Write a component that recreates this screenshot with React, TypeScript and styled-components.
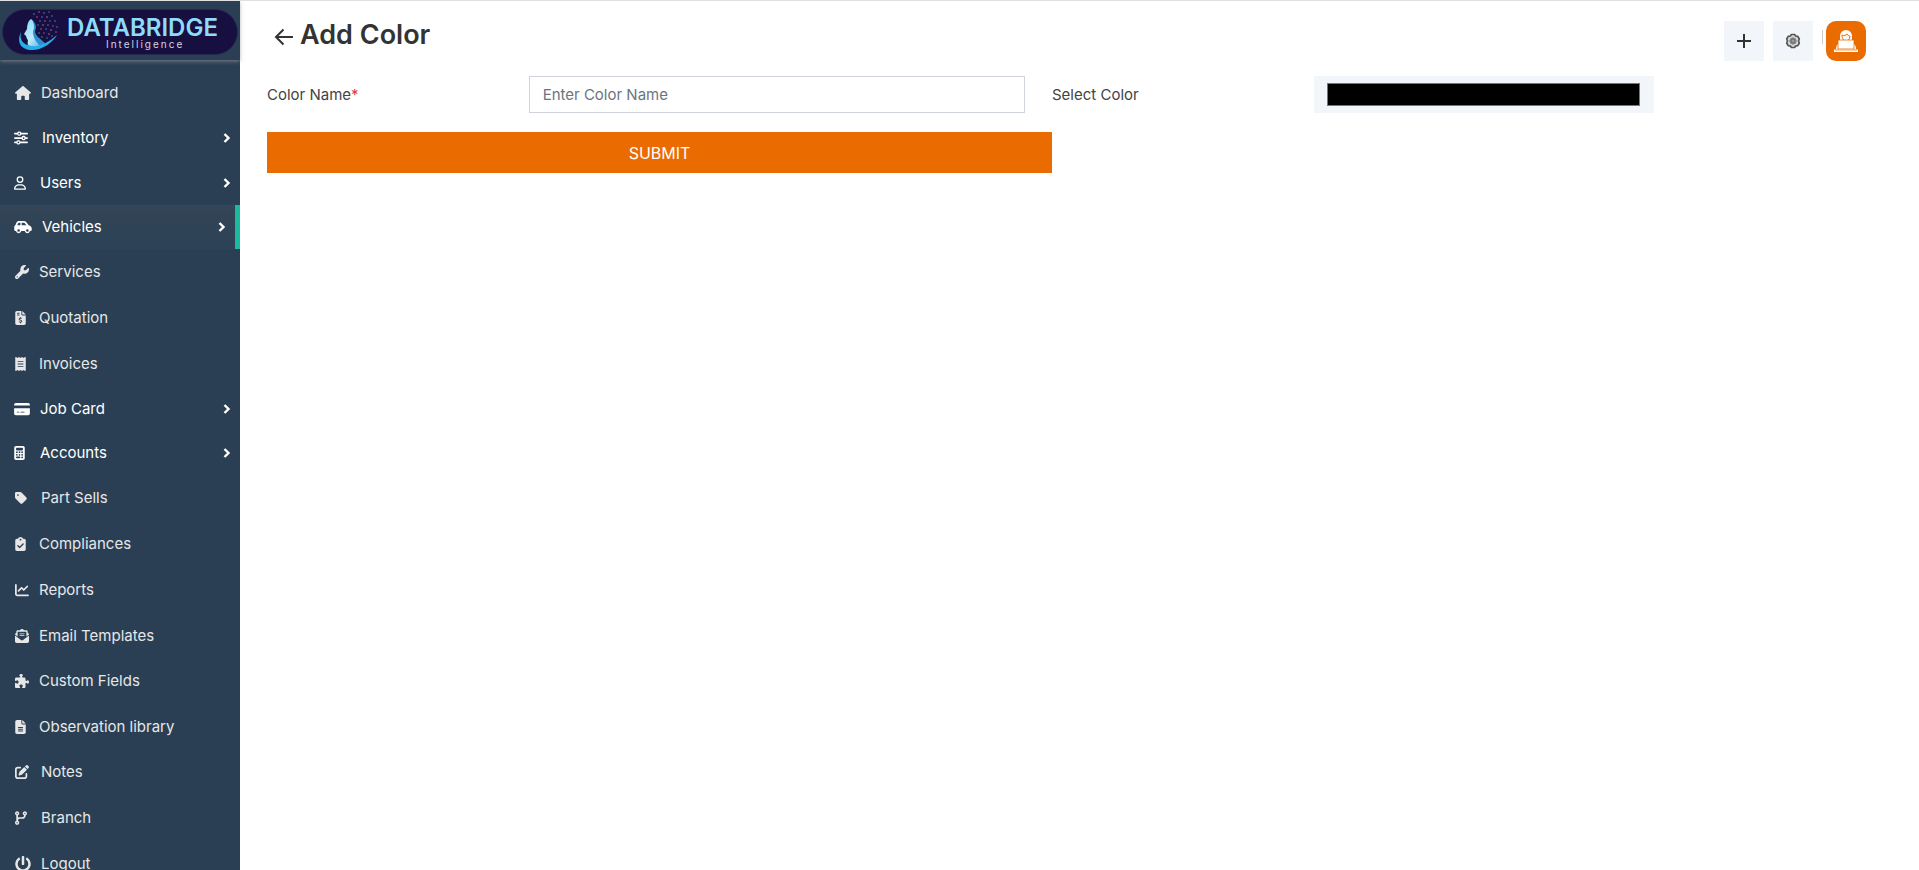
import React from 'react';
import styled, { createGlobalStyle, css } from 'styled-components';
import type { IconType } from 'react-icons';
import {
  FaHouse, FaSliders, FaRegUser, FaCarSide, FaWrench, FaFileInvoiceDollar, FaReceipt,
  FaCreditCard, FaCalculator, FaTag, FaPuzzlePiece, FaFileLines, FaChartLine,
  FaPenToSquare, FaCodeBranch, FaEnvelopeOpenText, FaClipboardCheck,
} from 'react-icons/fa6';
import { FaPowerOff } from 'react-icons/fa';

const GlobalStyle = createGlobalStyle`
  *, *::before, *::after { box-sizing: border-box; }
  body {
    margin: 0;
    background: #fff;
    color: #333;
    font-family: Inter, "Liberation Sans", sans-serif;
    font-size: 15px;
    line-height: 20px;
  }
`;

const Page = styled.div`
  display: flex;
  height: 100vh;
  border-top: 1px solid #e0e0e0;
  overflow: hidden;
`;

const Sidebar = styled.aside`
  flex: 0 0 240px;
  background: #2a3f54;
`;

const Brand = styled.a`
  display: flex;
  align-items: center;
  height: 59px;
  padding: 2px 2px 0;
  box-shadow: 0 1px 4px rgba(160, 160, 160, 0.7);
`;

const BrandLogo = styled.svg`
  display: block;
  width: 236px;
  height: 46px;
`;

const Menu = styled.ul`
  list-style: none;
  margin: 0;
  padding: 10px 0 0;
`;

const rowStyle = css<{ $height: number; $active?: boolean }>`
  display: flex;
  align-items: center;
  width: 100%;
  height: ${(p) => p.$height}px;
  border: 0;
  background: none;
  font: inherit;
  text-align: left;
  text-decoration: none;
  cursor: pointer;
`;

const IconSlot = styled.span<{ $iconWidth: number; $wide?: boolean }>`
  display: flex;
  align-items: center;
  flex: 0 0 ${(p) => (p.$wide ? 26 : 24)}px;

  & > svg {
    flex: none;
    width: ${(p) => p.$iconWidth}px;
  }
`;

const MenuLink = styled.a<{ $height: number }>`
  ${rowStyle}
  padding: 0 10px 0 15px;
  color: #e7e7e7;
`;

const MenuGroup = styled.button<{ $height: number; $active?: boolean }>`
  ${rowStyle}
  padding: 0 9px 0 14px;
  color: #fff;
  ${IconSlot} { margin-right: 2px; }
  ${(p) => p.$active && css`
    background: linear-gradient(#334556, #2c4257);
    border-right: 5px solid #1abb9c;
  `}
`;

const MenuText = styled.span`
  flex: 1;
`;

const Main = styled.main`
  flex: 1;
  min-width: 0;
`;

const Header = styled.header`
  display: flex;
  align-items: flex-start;
  justify-content: space-between;
  height: 75px;
  padding: 20px 53px 0 34px;
`;

const TitleBar = styled.div`
  display: flex;
  align-items: center;
  gap: 6px;
  height: 28px;
`;

const BackLink = styled.a`
  display: flex;
  padding-top: 4px;
  color: #333;
`;

const Title = styled.h1`
  margin: 0;
  font-size: 27px;
  font-weight: 600;
  line-height: 28px;
`;

const Actions = styled.div`
  display: flex;
  gap: 9px;
`;

const ActionButton = styled.button`
  display: flex;
  align-items: center;
  justify-content: center;
  width: 40px;
  height: 40px;
  padding: 0;
  border: 0;
  background: #f2f5fa;
  cursor: pointer;
`;

const Account = styled.div`
  display: flex;
  gap: 3px;
`;

const Divider = styled.span`
  width: 1px;
  height: 14px;
  margin-top: 9px;
  background: #ccc;
`;

const AvatarButton = styled(ActionButton)`
  border-radius: 10px;
  background: #ea6b00;
`;

const ColorForm = styled.form`
  display: grid;
  grid-template-columns: 2fr 4fr 2fr 4fr;
  row-gap: 19px;
  align-items: center;
  padding: 0 82px 0 27px;
`;

const Label = styled.label`
  color: #444;
`;

const Required = styled.span`
  color: #e03545;
`;

const FieldCell = styled.div`
  display: flex;
  padding-right: 27px;
`;

const TextInput = styled.input`
  width: 100%;
  height: 37px;
  padding: 0 13px;
  border: 1px solid #ced4da;
  border-radius: 0;
  background: #fff;
  color: #444;
  font: inherit;
  &::placeholder { color: #6c757d; opacity: 1; }
`;

const ColorInput = styled.input`
  display: block;
  width: 65%;
  height: 37px;
  padding: 7px 14px 7px 13px;
  border: 0;
  background: #f2f5fa;
  &::-webkit-color-swatch-wrapper { padding: 0; }
  &::-webkit-color-swatch { border: 1px solid #777; border-radius: 0; }
`;

const SubmitButton = styled.button`
  grid-column: 1 / 3;
  height: 41px;
  padding: 0;
  border: 0;
  background: #ea6b00;
  color: #fff;
  font-family: inherit;
  font-size: 16px;
  cursor: pointer;
`;

type Item = {
  label: string;
  icon: IconType;
  iconWidth: number;
  height: number;
  group?: boolean;
  active?: boolean;
  wide?: boolean;
};

const items: Item[] = [
  { label: 'Dashboard', icon: FaHouse, iconWidth: 16, height: 46, wide: true },
  { label: 'Inventory', icon: FaSliders, iconWidth: 14, height: 44, group: true, wide: true },
  { label: 'Users', icon: FaRegUser, iconWidth: 12, height: 45, group: true },
  { label: 'Vehicles', icon: FaCarSide, iconWidth: 18, height: 44, group: true, active: true, wide: true },
  { label: 'Services', icon: FaWrench, iconWidth: 14, height: 46 },
  { label: 'Quotation', icon: FaFileInvoiceDollar, iconWidth: 11, height: 46 },
  { label: 'Invoices', icon: FaReceipt, iconWidth: 11, height: 46 },
  { label: 'Job Card', icon: FaCreditCard, iconWidth: 16, height: 44, group: true },
  { label: 'Accounts', icon: FaCalculator, iconWidth: 11, height: 44, group: true },
  { label: 'Part Sells', icon: FaTag, iconWidth: 12, height: 46, wide: true },
  { label: 'Compliances', icon: FaClipboardCheck, iconWidth: 11, height: 46 },
  { label: 'Reports', icon: FaChartLine, iconWidth: 14, height: 46 },
  { label: 'Email Templates', icon: FaEnvelopeOpenText, iconWidth: 14, height: 45 },
  { label: 'Custom Fields', icon: FaPuzzlePiece, iconWidth: 14, height: 46 },
  { label: 'Observation library', icon: FaFileLines, iconWidth: 11, height: 45 },
  { label: 'Notes', icon: FaPenToSquare, iconWidth: 14, height: 46, wide: true },
  { label: 'Branch', icon: FaCodeBranch, iconWidth: 12, height: 46, wide: true },
  { label: 'Logout', icon: FaPowerOff, iconWidth: 16, height: 45, wide: true },
];

const dots: [number, number, string][] = [
  [32, 5, '#4b86c8'], [37, 3, '#c05a94'], [42, 4, '#4b86c8'], [47, 3, '#a34f8f'], [35, 8, '#b85890'],
  [40, 8, '#3f78bd'], [45, 8, '#c76a9a'], [50, 7, '#477fc0'], [38, 12, '#477fc0'], [43, 12, '#b85890'],
  [48, 12, '#3f78bd'], [53, 12, '#b85890'], [36, 16, '#3f78bd'], [41, 16, '#c76a9a'], [46, 16, '#477fc0'],
  [51, 17, '#a34f8f'], [55, 18, '#477fc0'], [39, 20, '#b85890'], [44, 20, '#477fc0'], [49, 21, '#c76a9a'],
  [54, 23, '#b85890'], [37, 24, '#477fc0'], [42, 24, '#a34f8f'], [47, 25, '#c76a9a'], [40, 28, '#477fc0'],
  [45, 29, '#3f78bd'], [50, 27, '#477fc0'],
];

function Logo() {
  return (
    <BrandLogo viewBox="0 0 236 46" role="img" aria-label="Databridge Intelligence">
      <defs>
        <linearGradient id="face" x1="0" y1="0" x2="1" y2="1">
          <stop offset="0" stopColor="#7fdcf8" />
          <stop offset="0.5" stopColor="#bceafa" />
          <stop offset="1" stopColor="#3aa4e4" />
        </linearGradient>
      </defs>
      <rect x="0.5" y="0.5" width="235" height="45" rx="22.5" fill="#170f40" stroke="#252b50" />
      {dots.map(([x, y, color]) => <circle key={`${x}-${y}`} cx={x} cy={y} r="0.8" fill={color} />)}
      <path d="M29 10C32 12 33 16 32 20C31 24 33 27 35 31C37 34 41 35 44 35C39 39 29 40 26 36C25 33 27 31 25 30L24 27L22 25L25 20C25 16 26 12 29 10Z" fill="url(#face)" />
      <path d="M29 10C34 14 35 18 33 22C33 27 38 29 44 35L38 37C34 33 31 28 31 23C33 18 32 13 29 10Z" fill="#2b8fd2" />
      <path d="M19 23C14 33 19 41 30 41C41 41 51 33 55 26C47 33 38 38 30 37C22 36 17 32 19 23Z" fill="#25aee8" />
      <text x="65" y="27" fill="#8cdcfa" fontFamily="Inter, sans-serif" fontSize="24" fontWeight="600">DATABRIDGE</text>
      <text x="104" y="39" fill="#d5d3e3" fontFamily="Inter, sans-serif" fontSize="10" letterSpacing="2">Intelligence</text>
    </BrandLogo>
  );
}

function ChevronIcon() {
  return (
    <svg width="8" height="10" viewBox="0 0 8 10" fill="none" stroke="currentColor" strokeWidth="2.4" aria-hidden="true">
      <path d="M1.500 1L5.500 5L1.500 9" />
    </svg>
  );
}

function GearIcon() {
  return (
    <svg width="16" height="16" viewBox="0 0 16 16" fill="none" stroke="#555" aria-hidden="true">
      <path d="M6.400 1.500h3.200l1 1.500 2.200.3 1.500 2.700-.8 2 .8 2-1.500 2.700-2.200.3-1 1.500H6.400l-1-1.500-2.200-.3L1.700 10l.8-2-.8-2 1.500-2.700L5.400 3z" fill="#d8dade" strokeWidth="1.700" strokeLinejoin="round" />
      <circle cx="8" cy="8" r="3.200" fill="#777" stroke="#888" strokeWidth="1" />
      <circle cx="8" cy="8" r="1.300" fill="#999" stroke="none" />
    </svg>
  );
}

function AvatarIcon() {
  return (
    <svg width="24" height="24" viewBox="0 0 24 24" aria-hidden="true">
      <path d="M6 12V7a6 6 0 0 1 12 0v5z" fill="#fff" />
      <path d="M8 6c2 1 4 .5 5-1 1 1.500 2 2 3 2-.2 3-1.800 5-4 5S8 9.500 8 6z" fill="#fff" stroke="#ea6b00" strokeWidth="1" />
      <path d="M2 20c0-3 1-5 3-5h14c2 0 3 2 3 5z" fill="#fff" />
      <path d="M4 11h16v9H4z" fill="#fff" stroke="#ea6b00" strokeWidth="0.800" />
      <path d="M0 20.500h24V23H0z" fill="#fff" />
      <path d="M1 21.500h22" stroke="#f4b27c" strokeWidth="0.600" />
    </svg>
  );
}

export default function App() {
  return (
    <>
      <GlobalStyle />
      <Page>
        <Sidebar>
          <Brand href="#"><Logo /></Brand>
          <nav>
            <Menu>
              {items.map(({ label, icon: Icon, iconWidth, height, group, active, wide }) => {
                const content = (
                  <>
                    <IconSlot $iconWidth={iconWidth} $wide={wide}>
                      <Icon size={label === 'Logout' ? 16 : 14} aria-hidden />
                    </IconSlot>
                    <MenuText>{label}</MenuText>
                  </>
                );
                return (
                  <li key={label}>
                    {group ? (
                      <MenuGroup type="button" $height={height} $active={active}>
                        {content}
                        <ChevronIcon />
                      </MenuGroup>
                    ) : (
                      <MenuLink href="#" $height={height}>{content}</MenuLink>
                    )}
                  </li>
                );
              })}
            </Menu>
          </nav>
        </Sidebar>
        <Main>
          <Header>
            <TitleBar>
              <BackLink href="#" aria-label="Back">
                <svg width="20" height="18" viewBox="0 0 20 18" fill="none" stroke="currentColor" strokeWidth="2" aria-hidden="true">
                  <path d="M19 9H2.500M9.500 1.500L2 9l7.500 7.500" />
                </svg>
              </BackLink>
              <Title>Add Color</Title>
            </TitleBar>
            <Actions>
              <ActionButton type="button" aria-label="Add">
                <svg width="16" height="16" viewBox="0 0 16 16" stroke="#333" strokeWidth="2" aria-hidden="true">
                  <path d="M8 1v14M1 8h14" />
                </svg>
              </ActionButton>
              <ActionButton type="button" aria-label="Settings"><GearIcon /></ActionButton>
              <Account>
                <Divider />
                <AvatarButton type="button" aria-label="Account"><AvatarIcon /></AvatarButton>
              </Account>
            </Actions>
          </Header>
          <ColorForm>
            <Label htmlFor="color-name">Color Name<Required>*</Required></Label>
            <FieldCell><TextInput id="color-name" type="text" placeholder="Enter Color Name" /></FieldCell>
            <Label htmlFor="color-value">Select Color</Label>
            <ColorInput id="color-value" type="color" defaultValue="#000000" />
            <SubmitButton type="submit">SUBMIT</SubmitButton>
          </ColorForm>
        </Main>
      </Page>
    </>
  );
}
